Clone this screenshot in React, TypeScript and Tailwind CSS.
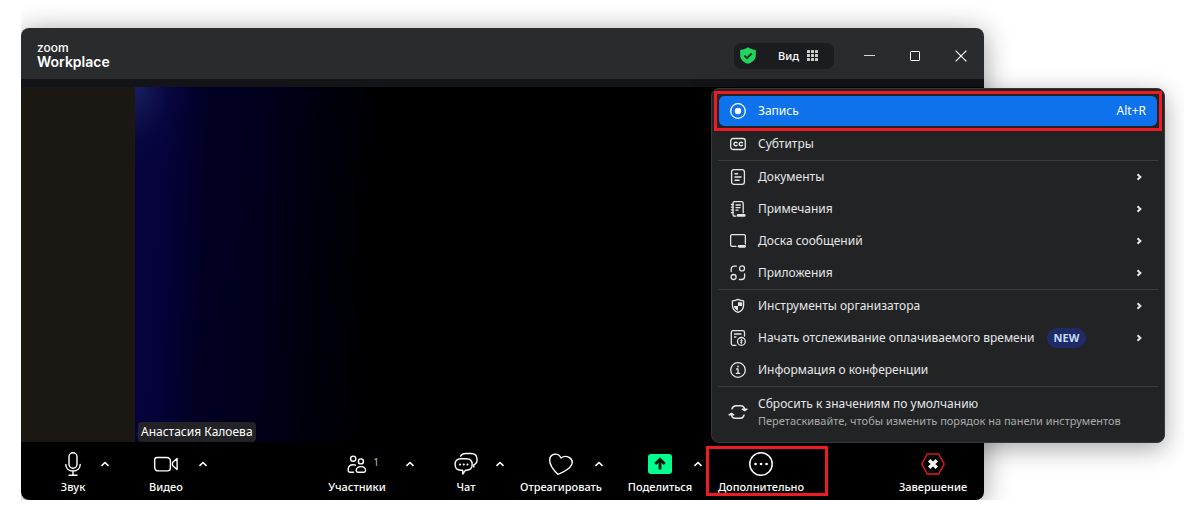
import React from "react";

type IconProps = { className?: string };

const Svg: React.FC<{ size?: string; box?: string; children: React.ReactNode }> = ({
  size = "w-4 h-4",
  box = "0 0 16 16",
  children,
}) => (
  <svg
    viewBox={box}
    className={`${size} shrink-0`}
    fill="none"
    stroke="currentColor"
    strokeWidth="1.3"
    strokeLinecap="round"
    strokeLinejoin="round"
    aria-hidden="true"
  >
    {children}
  </svg>
);

const RecordIcon = () => (
  <Svg>
    <circle cx="8" cy="8" r="7.3" />
    <circle cx="8" cy="8" r="3.2" fill="currentColor" stroke="none" />
  </Svg>
);

const CaptionsIcon = () => (
  <Svg>
    <rect x="0.7" y="2.5" width="14.6" height="11" rx="2.4" />
    <path d="M7.1 6.8a1.8 1.8 0 1 0 0 2.4M12.4 6.8a1.8 1.8 0 1 0 0 2.4" strokeWidth="1.5" />
  </Svg>
);

const DocsIcon = () => (
  <Svg>
    <rect x="1.6" y="0.7" width="12.8" height="14.6" rx="2.4" />
    <path d="M5 4.7h2.5M5 8h6M5 11.3h4" strokeWidth="1.5" />
  </Svg>
);

const NotesIcon = () => (
  <Svg>
    <path d="M3 2.4C3 1.3 3.6.7 4.6.7h7c1 0 1.6.7 1.6 1.7v9.4M3 2.4v10.8c0 1.2.6 1.9 1.8 1.9H6" />
    <path d="M1.4 3.5h1.8M1.4 6.2h1.8M1.4 8.9h1.8M1.4 11.6h1.8M6 4h4.4M6 6.6h4M6 9.2h2" />
    <path d="M8.2 14.4h6" strokeWidth="2.8" />
  </Svg>
);

const WhiteboardIcon = () => (
  <Svg>
    <path d="M6 13.3H2.2c-1 0-1.6-.6-1.6-1.6V3.2c0-1 .6-1.6 1.6-1.6h11.6c1 0 1.6.6 1.6 1.6V11" />
    <path d="M9.2 13.3h5.4" strokeWidth="2.8" />
  </Svg>
);

const AppsIcon = () => (
  <Svg>
    <circle cx="12" cy="3.4" r="2.5" />
    <circle cx="3.6" cy="12" r="2.5" />
    <path d="M1.2 6.5V4.2c0-1.9 1.1-3 3-3h2.2M14.6 9v2.5c0 1.9-1.1 3-3 3H9.4" />
  </Svg>
);

const HostIcon = () => (
  <Svg>
    <path d="M8 1.4c1.8 1 3.6 1.4 5.6 1.4v4.4c0 3.4-2.2 5.9-5.6 7.2-3.4-1.3-5.6-3.8-5.6-7.2V2.8c2 0 3.8-.4 5.6-1.4Z" />
    <path d="M8 4v4h4.2V4.6C10.7 4.500 9.300 4.300 8 4ZM8 8H3.900c.3 2.200 1.700 3.700 4.100 4.700Z" fill="currentColor" stroke="none" />
  </Svg>
);

const BillableIcon = () => (
  <Svg>
    <path d="M6 15.300H3c-1 0-1.700-.7-1.700-1.700V2.400c0-1 .7-1.700 1.700-1.700h9.800c1 0 1.700.7 1.700 1.700V6M4.500 4H11M4.500 7h1.500" />
    <circle cx="11.4" cy="11.4" r="3.9" />
    <path d="M12.4 10.3c-1.500-.8-2.500.4-1 1.100 1.500.6.500 1.900-1 1.100M11.400 9.300v4.200" strokeWidth="0.9" />
  </Svg>
);

const InfoIcon = () => (
  <Svg>
    <circle cx="8" cy="8" r="7.3" />
    <path d="M6.6 7H8v4.3M6.300 11.400h3.400" />
    <circle cx="8" cy="4.5" r="0.9" fill="currentColor" stroke="none" />
  </Svg>
);

const ResetIcon = () => (
  <Svg size="w-5 h-4" box="0 0 20 16">
    <path d="M4 4.800C4.600 2.800 5.700 1.700 8 1.700h4.600c2.600 0 3.900 1.600 4 4M16 11.200c-.6 2-1.700 3.100-4 3.100H7.400c-2.600 0-3.900-1.600-4-4" strokeWidth="1.5" />
    <path d="m14.200 5.200 2.500 1.500L19 5.200ZM1 10.800l2.400-1.500 2.400 1.500Z" fill="currentColor" />
  </Svg>
);

const ChevronRight = () => (
  <svg viewBox="0 0 14 14" className="h-3.5 w-3.5" fill="none" stroke="currentColor" strokeWidth="2" aria-hidden="true">
    <path d="m5.500 4.200 2.900 2.800-2.900 2.800" />
  </svg>
);

const MicIcon: React.FC<IconProps> = ({ className }) => (
  <svg viewBox="0 0 24 24" className={className} fill="none" stroke="currentColor" strokeWidth="1.4" strokeLinecap="round" aria-hidden="true">
    <rect x="8" y="0.8" width="8" height="15.4" rx="4" />
    <path d="M4.800 12.500c0 4 3 6.500 7.200 6.500s7.200-2.500 7.200-6.500M12 19v4M8 23.200h8" />
  </svg>
);

const VideoIcon: React.FC<IconProps> = ({ className }) => (
  <svg viewBox="0 0 24 24" className={className} fill="none" stroke="currentColor" strokeWidth="1.4" strokeLinejoin="round" aria-hidden="true">
    <path d="M3 5.500h9.500c2.600 0 3.900 1.300 3.900 3.900V16c0 1.900-1 2.900-2.900 2.900H4.600C2 18.900.7 17.600.7 15V7.800C.7 6.300 1.500 5.500 3 5.500Z" />
    <path d="m18.500 10.600 4.600-4.200v11.200l-4.600-4.200Z" />
  </svg>
);

const PeopleIcon: React.FC<IconProps> = ({ className }) => (
  <svg viewBox="0 0 24 24" className={className} fill="none" stroke="currentColor" strokeWidth="1.4" strokeLinecap="round" strokeLinejoin="round" aria-hidden="true">
    <circle cx="8.2" cy="6.7" r="2.6" />
    <circle cx="15.9" cy="9.4" r="2.5" />
    <path d="M8.500 20.300H5.200c-1.300 0-2-.7-2-2v-1.100c0-2.800 1.700-4.400 4.700-4.400 1 0 1.800.1 2.500.4" />
    <path d="M11.200 18.600c0-2.400 1.600-4 4.700-4s4.700 1.600 4.700 4c0 1.200-.6 1.700-1.700 1.700h-6c-1.100 0-1.700-.5-1.700-1.700Z" />
  </svg>
);

const ChatIcon: React.FC<IconProps> = ({ className }) => (
  <svg viewBox="0 0 24 24" className={className} fill="none" stroke="currentColor" strokeWidth="1.4" strokeLinecap="round" strokeLinejoin="round" aria-hidden="true">
    <path d="M6.600 4.200c.9-1.800 2.700-2.700 5.100-2.700h5.100c4 0 6.300 2.200 6.300 5.900 0 2.600-1.100 4.500-3.300 5.400v2.300" />
    <path d="M6.800 6.800h5.700c3.600 0 5.700 2.200 5.700 5.800 0 3.400-2.100 5.600-5.700 5.600h-.9L8.700 22v-3.800H6.800c-3.700 0-5.700-2.200-5.700-5.600 0-3.600 2-5.800 5.700-5.800Z" />
    <path d="M6 12.600h.1M9.700 12.600h.1M13.400 12.600h.1" strokeWidth="2" />
  </svg>
);

const HeartIcon: React.FC<IconProps> = ({ className }) => (
  <svg viewBox="0 0 24 24" className={className} fill="none" stroke="currentColor" strokeWidth="1.4" strokeLinejoin="round" aria-hidden="true">
    <path d="M8.800 22.300C5 18.600.8 14 .7 8.500.6 5 2.400 2.700 5.500 2.200c2.800-.4 5.200 1 6.500 3.800 2.100-1.600 5.300-2.100 8-.6 2.900 1.700 3.900 4.500 2.600 7.400-2.200 4.800-8.400 7.500-13.800 9.500Z" />
  </svg>
);

const ShareIcon: React.FC<IconProps> = ({ className }) => (
  <svg viewBox="0 0 24 24" className={className} fill="none" aria-hidden="true">
    <rect y="2" width="24" height="20" rx="3" fill="#00ff8c" />
    <path d="M12 17.500V8M7.300 12 12 7.300l4.700 4.700" stroke="#04160d" strokeWidth="2.8" />
  </svg>
);

const MoreIcon: React.FC<IconProps> = ({ className }) => (
  <svg viewBox="0 0 24 24" className={className} fill="none" stroke="currentColor" strokeWidth="1.5" strokeLinecap="round" aria-hidden="true">
    <circle cx="12" cy="12" r="11.2" />
    <path d="M6.500 12h.1M12 12h.1M17.500 12h.1" strokeWidth="2.6" />
  </svg>
);

const EndIcon: React.FC<IconProps> = ({ className }) => (
  <svg viewBox="0 0 24 24" className={className} fill="none" aria-hidden="true">
    <path d="M6.400 2h11.200l5.600 10-5.600 10H6.400L.8 12Z" stroke="#ee1c24" strokeWidth="1.4" />
    <path d="m8.200 8.200 7.600 7.600M15.800 8.200l-7.600 7.600" stroke="#fff" strokeWidth="3.4" />
  </svg>
);

const Caret: React.FC<{ label: string; className?: string }> = ({ label, className = "" }) => (
  <button type="button" aria-label={label} className={`flex h-6 w-4 shrink-0 items-center justify-center ${className}`}>
    <svg viewBox="0 0 10 6" className="h-1.5 w-2.5" fill="none" stroke="currentColor" strokeWidth="1.6" aria-hidden="true">
      <path d="M1.500 4.800 5 1.500l3.500 3.300" />
    </svg>
  </button>
);

const Tool: React.FC<{
  label: string;
  icon: React.FC<IconProps>;
  className: string;
  caret?: string;
  badge?: string;
}> = ({ label, icon: Icon, className, caret, badge }) => (
  <div className="flex items-start">
    <button type="button" className={`flex shrink-0 flex-col items-center gap-[3px] whitespace-nowrap ${className}`}>
      <span className="relative">
        <Icon className="h-6 w-6" />
        {badge && <span className="absolute left-7 top-0.5 text-[11px] leading-4 text-[#b4b4b8]">{badge}</span>}
      </span>
      <span className="text-[11px] font-medium leading-4">{label}</span>
    </button>
    {caret !== undefined && <Caret label={`${label}: параметры`} className={caret} />}
  </div>
);

const MenuRow: React.FC<{
  label: string;
  icon: React.FC;
  arrow?: boolean;
  isNew?: boolean;
}> = ({ label, icon: Icon, arrow, isNew }) => (
  <button type="button" role="menuitem" className="flex h-8 w-full items-center gap-3 px-3 text-left">
    <Icon />
    <span className="flex flex-1 items-center gap-3 whitespace-nowrap">
      {label}
      {isNew && (
        <span className="rounded-full bg-[#1f2b66] px-[7px] text-[11px] font-bold leading-5 text-[#c5dcf5]">NEW</span>
      )}
    </span>
    {arrow && <ChevronRight />}
  </button>
);

const Divider = () => <div role="separator" className="h-px bg-[#3c3d3f]" />;

const MoreMenu = () => (
  <div
    role="menu"
    className="absolute -right-[181px] top-[60px] w-[454px] rounded-lg border border-[#37383a] bg-[#222325] px-1.5 pt-1.5 text-[12px] leading-5 text-[#e6e7e9] shadow-[0_6px_24px_rgba(0,0,0,0.35)]"
  >
    <div className="relative mb-px">
      <button
        type="button"
        role="menuitem"
        className="flex h-8 w-full items-center gap-3 rounded-md border border-[#222325] bg-[#0e72ed] bg-clip-padding px-[11px] text-left text-white"
      >
        <RecordIcon />
        <span className="flex-1">Запись</span>
        <span>Alt+R</span>
      </button>
      <div className="pointer-events-none absolute -inset-1 border-[3px] border-[#ed1c24]" />
    </div>
    <MenuRow label="Субтитры" icon={CaptionsIcon} />
    <Divider />
    <MenuRow label="Документы" icon={DocsIcon} arrow />
    <MenuRow label="Примечания" icon={NotesIcon} arrow />
    <MenuRow label="Доска сообщений" icon={WhiteboardIcon} arrow />
    <MenuRow label="Приложения" icon={AppsIcon} arrow />
    <Divider />
    <MenuRow label="Инструменты организатора" icon={HostIcon} arrow />
    <MenuRow label="Начать отслеживание оплачиваемого времени" icon={BillableIcon} arrow isNew />
    <MenuRow label="Информация о конференции" icon={InfoIcon} />
    <Divider />
    <button type="button" role="menuitem" className="flex w-full items-center gap-2.5 px-2.5 pb-[13px] pt-2 text-left">
      <ResetIcon />
      <span className="flex flex-col whitespace-nowrap">
        <span className="leading-[18px]">Сбросить к значениям по умолчанию</span>
        <span className="text-[11px] leading-4 text-[#a9aaac]">
          Перетаскивайте, чтобы изменить порядок на панели инструментов
        </span>
      </span>
    </button>
  </div>
);

const TitleBar = () => (
  <header className="flex h-[51px] items-center justify-between rounded-t-lg bg-[#2a2b2d] pl-4 pt-1">
    <div className="flex flex-col font-['Inter']">
      <span className="text-[12px] font-medium leading-3">zoom</span>
      <span className="text-[14px] font-semibold leading-4">Workplace</span>
    </div>
    <div className="flex items-center">
      <div className="mr-3 flex h-[26px] items-center rounded-lg bg-[#1b1c20] pl-1.5 pr-4">
        <button type="button" aria-label="Безопасность" className="mr-[22px]">
          <svg viewBox="0 0 16 17" className="h-[17px] w-4" fill="none" aria-hidden="true">
            <path d="M8 .2c2.200 1.600 4.900 2.500 7.800 2.600v5.400c0 4-3 7-7.800 8.600C3.200 15.200.2 12.200.2 8.200V2.800C3.100 2.700 5.800 1.800 8 .2Z" fill="#23d35e" />
            <path d="m4.400 8.600 2.600 2.600 4.800-4.900" stroke="#13351f" strokeWidth="1.9" />
          </svg>
        </button>
        <button type="button" className="flex items-center gap-2 text-[11px] font-medium leading-4">
          Вид
          <svg viewBox="0 0 11 11" className="h-[11px] w-[11px]" fill="#c9cfca" aria-hidden="true">
            {[0, 4, 8].map((y) => [0, 4, 8].map((x) => <rect key={`${x}-${y}`} x={x} y={y} width="3" height="3" rx="0.5" />))}
          </svg>
        </button>
      </div>
      <button type="button" aria-label="Свернуть" className="flex h-8 w-[46px] items-center justify-center">
        <span className="h-px w-[11px] bg-[#d5dad6]" />
      </button>
      <button type="button" aria-label="Развернуть" className="flex h-8 w-[46px] items-center justify-center">
        <span className="h-2.5 w-2.5 rounded-[1px] border border-white" />
      </button>
      <button type="button" aria-label="Закрыть" className="flex h-8 w-[46px] items-center justify-center">
        <svg viewBox="0 0 12 12" className="h-3 w-3" stroke="currentColor" strokeWidth="1.2" aria-hidden="true">
          <path d="m.6.6 10.800 10.800M11.400.6.6 11.400" />
        </svg>
      </button>
    </div>
  </header>
);

const Stage = () => (
  <section className="flex h-[355px] bg-black">
    <div className="w-[114px] bg-[#1b1713]" />
    <div className="flex flex-1 items-end bg-[radial-gradient(ellipse_60px_90px_at_0_0,rgba(40,56,130,0.5),rgba(20,24,90,0.15)_60%,transparent),linear-gradient(93deg,#06033a_0px,#05023a_35px,#010024_75px,#00001c_130px,#00000c_190px,#000_250px)] pl-[3px]">
      <span className="rounded bg-[#232327] px-[3px] text-[12px] leading-5 text-white">Анастасия Калоева</span>
    </div>
  </section>
);

const Toolbar = () => (
  <footer className="flex h-[58px] items-start rounded-b-lg bg-black pl-7 pr-4">
    <div className="mr-[101px] flex gap-6 pt-2.5">
      <Tool label="Звук" icon={MicIcon} className="w-12" caret="" />
      <Tool label="Видео" icon={VideoIcon} className="w-[58px]" caret="" />
    </div>
    <div className="flex pt-2.5">
      <Tool label="Участники" icon={PeopleIcon} className="w-[90px]" caret="mr-[22px]" badge="1" />
      <Tool label="Чат" icon={ChatIcon} className="w-[52px]" caret="mr-[11px]" />
      <Tool label="Отреагировать" icon={HeartIcon} className="w-[84px]" caret="-ml-3 mr-[19px]" />
      <Tool label="Поделиться" icon={ShareIcon} className="w-[68px]" caret="-ml-1" />
    </div>
    <div className="relative z-10 mt-1 h-[50px] w-[122px] border-[3px] border-[#ed1c24] pt-[3px]">
      <Tool label="Дополнительно" icon={MoreIcon} className="w-[104px]" />
    </div>
    <div className="ml-auto pt-2.5">
      <Tool label="Завершение" icon={EndIcon} className="w-[70px]" />
    </div>
  </footer>
);

export default function App() {
  return (
    <div className="min-h-screen bg-white font-['Noto_Sans',sans-serif] text-white">
      <main className="ml-[21px] overflow-hidden pr-[200px] pt-7">
        <div className="relative rounded-lg shadow-[0_4px_28px_rgba(0,0,0,0.4)]">
          <TitleBar />
          <div className="h-2 bg-[#131418]" />
          <Stage />
          <Toolbar />
          <MoreMenu />
        </div>
      </main>
    </div>
  );
}
